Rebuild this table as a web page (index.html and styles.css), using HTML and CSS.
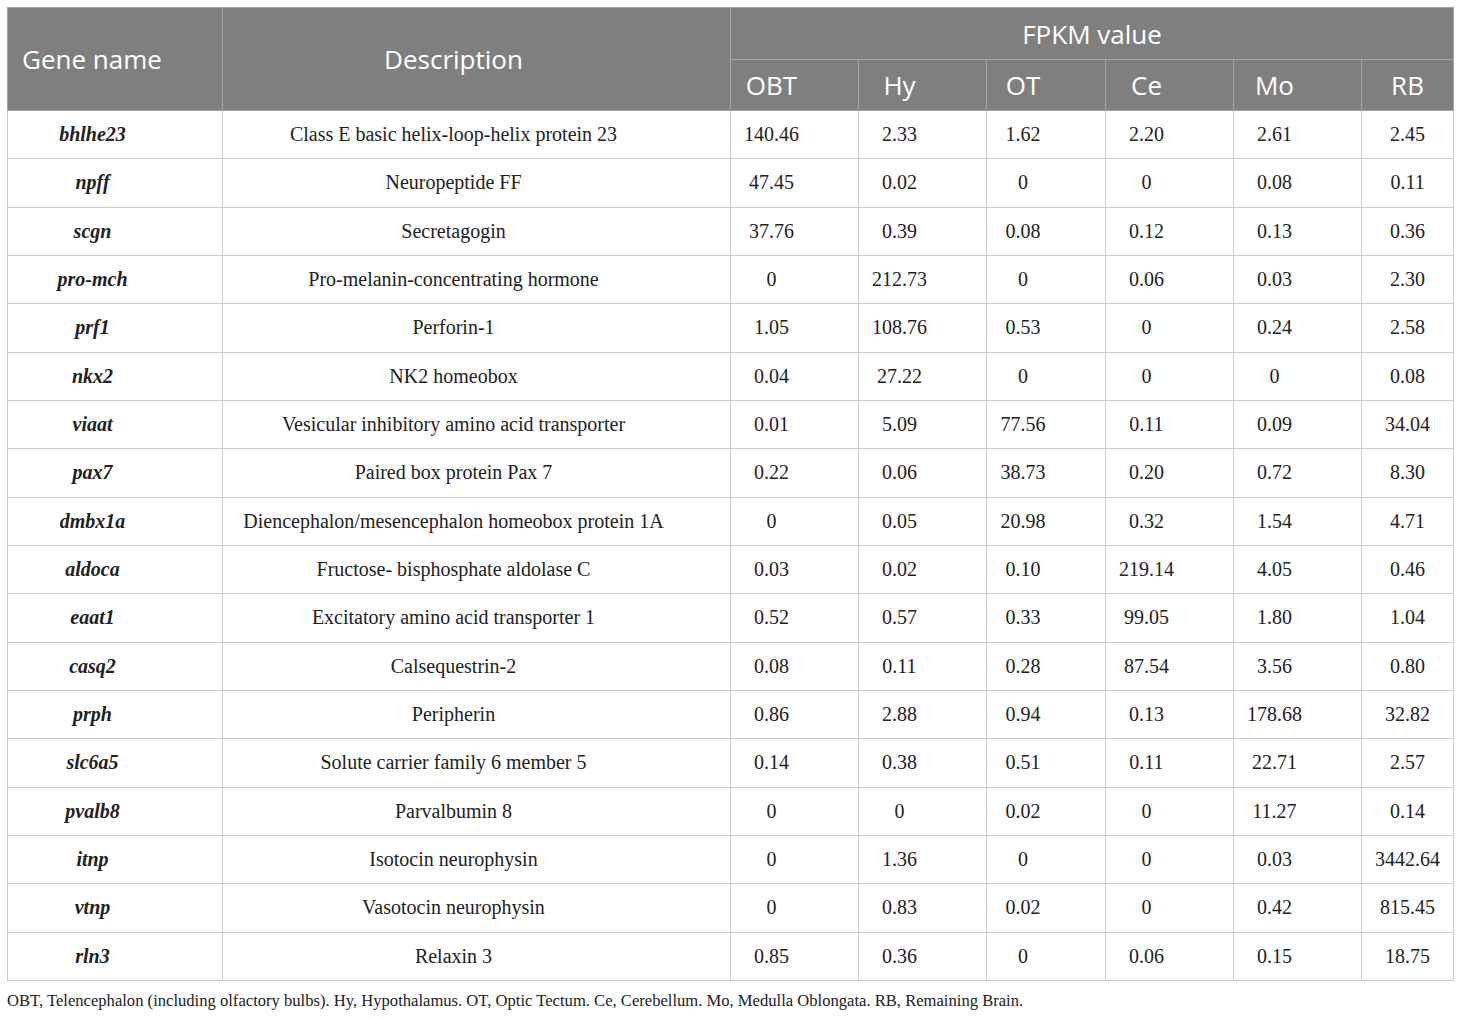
FILE: index.html
```html
<!DOCTYPE html>
<html>
<head>
<meta charset="utf-8">
<link rel="stylesheet" href="styles.css">
</head>
<body>
<div class="wrap">
<table class="data">
<colgroup>
<col class="c-gene"><col class="c-desc"><col class="c-v"><col class="c-v"><col class="c-v2"><col class="c-v"><col class="c-v"><col class="c-rb">
</colgroup>
<thead>
<tr class="h1">
<th rowspan="2" class="gene-h">Gene name</th>
<th rowspan="2" class="off">Description</th>
<th colspan="6" class="fpkm">FPKM value</th>
</tr>
<tr class="h2">
<th class="off">OBT</th><th class="off">Hy</th><th class="off">OT</th><th class="off">Ce</th><th class="off">Mo</th><th>RB</th>
</tr>
</thead>
<tbody>
<tr><td class="gene">bhlhe23</td><td class="off">Class E basic helix-loop-helix protein 23</td><td class="off">140.46</td><td class="off">2.33</td><td class="off">1.62</td><td class="off">2.20</td><td class="off">2.61</td><td>2.45</td></tr>
<tr><td class="gene">npff</td><td class="off">Neuropeptide FF</td><td class="off">47.45</td><td class="off">0.02</td><td class="off">0</td><td class="off">0</td><td class="off">0.08</td><td>0.11</td></tr>
<tr><td class="gene">scgn</td><td class="off">Secretagogin</td><td class="off">37.76</td><td class="off">0.39</td><td class="off">0.08</td><td class="off">0.12</td><td class="off">0.13</td><td>0.36</td></tr>
<tr><td class="gene">pro-mch</td><td class="off">Pro-melanin-concentrating hormone</td><td class="off">0</td><td class="off">212.73</td><td class="off">0</td><td class="off">0.06</td><td class="off">0.03</td><td>2.30</td></tr>
<tr><td class="gene">prf1</td><td class="off">Perforin-1</td><td class="off">1.05</td><td class="off">108.76</td><td class="off">0.53</td><td class="off">0</td><td class="off">0.24</td><td>2.58</td></tr>
<tr><td class="gene">nkx2</td><td class="off">NK2 homeobox</td><td class="off">0.04</td><td class="off">27.22</td><td class="off">0</td><td class="off">0</td><td class="off">0</td><td>0.08</td></tr>
<tr><td class="gene">viaat</td><td class="off">Vesicular inhibitory amino acid transporter</td><td class="off">0.01</td><td class="off">5.09</td><td class="off">77.56</td><td class="off">0.11</td><td class="off">0.09</td><td>34.04</td></tr>
<tr><td class="gene">pax7</td><td class="off">Paired box protein Pax 7</td><td class="off">0.22</td><td class="off">0.06</td><td class="off">38.73</td><td class="off">0.20</td><td class="off">0.72</td><td>8.30</td></tr>
<tr><td class="gene">dmbx1a</td><td class="off">Diencephalon/mesencephalon homeobox protein 1A</td><td class="off">0</td><td class="off">0.05</td><td class="off">20.98</td><td class="off">0.32</td><td class="off">1.54</td><td>4.71</td></tr>
<tr><td class="gene">aldoca</td><td class="off">Fructose- bisphosphate aldolase C</td><td class="off">0.03</td><td class="off">0.02</td><td class="off">0.10</td><td class="off">219.14</td><td class="off">4.05</td><td>0.46</td></tr>
<tr><td class="gene">eaat1</td><td class="off">Excitatory amino acid transporter 1</td><td class="off">0.52</td><td class="off">0.57</td><td class="off">0.33</td><td class="off">99.05</td><td class="off">1.80</td><td>1.04</td></tr>
<tr><td class="gene">casq2</td><td class="off">Calsequestrin-2</td><td class="off">0.08</td><td class="off">0.11</td><td class="off">0.28</td><td class="off">87.54</td><td class="off">3.56</td><td>0.80</td></tr>
<tr><td class="gene">prph</td><td class="off">Peripherin</td><td class="off">0.86</td><td class="off">2.88</td><td class="off">0.94</td><td class="off">0.13</td><td class="off">178.68</td><td>32.82</td></tr>
<tr><td class="gene">slc6a5</td><td class="off">Solute carrier family 6 member 5</td><td class="off">0.14</td><td class="off">0.38</td><td class="off">0.51</td><td class="off">0.11</td><td class="off">22.71</td><td>2.57</td></tr>
<tr><td class="gene">pvalb8</td><td class="off">Parvalbumin 8</td><td class="off">0</td><td class="off">0</td><td class="off">0.02</td><td class="off">0</td><td class="off">11.27</td><td>0.14</td></tr>
<tr><td class="gene">itnp</td><td class="off">Isotocin neurophysin</td><td class="off">0</td><td class="off">1.36</td><td class="off">0</td><td class="off">0</td><td class="off">0.03</td><td>3442.64</td></tr>
<tr><td class="gene">vtnp</td><td class="off">Vasotocin neurophysin</td><td class="off">0</td><td class="off">0.83</td><td class="off">0.02</td><td class="off">0</td><td class="off">0.42</td><td>815.45</td></tr>
<tr><td class="gene">rln3</td><td class="off">Relaxin 3</td><td class="off">0.85</td><td class="off">0.36</td><td class="off">0</td><td class="off">0.06</td><td class="off">0.15</td><td>18.75</td></tr>
</tbody>
</table>
<p class="note">OBT, Telencephalon (including olfactory bulbs). Hy, Hypothalamus. OT, Optic Tectum. Ce, Cerebellum. Mo, Medulla Oblongata. RB, Remaining Brain.</p>
</div>
</body>
</html>
```
FILE: styles.css
```css
html, body {
  margin: 0;
  padding: 0;
  background: #ffffff;
}
.wrap {
  padding: 7px 7px 0 7px;
}
.data {
  border-collapse: collapse;
  table-layout: fixed;
  width: 1447px;
  font-family: "Liberation Serif", "Times New Roman", serif;
  font-size: 20px;
  color: #222222;
}
.c-gene { width: 215px; }
.c-desc { width: 508px; }
.c-v { width: 128px; }
.c-v2 { width: 119px; }
.c-rb { width: 92px; }
.data th {
  background: #7f7f7f;
  color: #ffffff;
  font-family: "Open Sans", "Noto Sans", sans-serif;
  font-weight: 400;
  font-size: 26px;
  border: 1px solid #a3a3a3;
  text-align: center;
  padding: 0;
}
.data thead tr.h1 { height: 52px; }
.data thead tr.h2 { height: 51px; }
.data th.gene-h {
  text-align: left;
  padding-left: 14px;
}
.data th.fpkm {
  text-align: center;
}
.data tbody tr {
  height: 48.33px;
}
.data td {
  border: 1px solid #cccccc;
  text-align: center;
  padding: 0;
}
.data .off {
  padding-right: 46px;
}
.data td.gene {
  font-weight: bold;
  font-style: italic;
  padding-right: 45px;
}
.note {
  margin: 10px 0 0 0;
  font-family: "Liberation Serif", "Times New Roman", serif;
  font-size: 16.6px;
  color: #222222;
}
```
